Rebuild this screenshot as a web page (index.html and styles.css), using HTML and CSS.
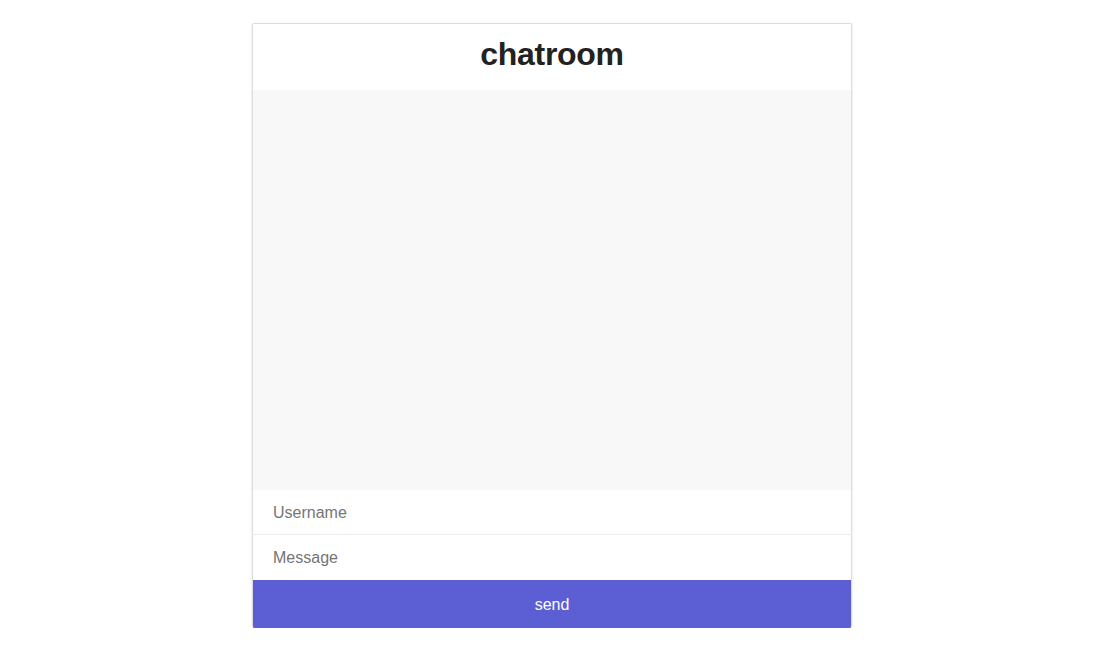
FILE: index.html
```html
<!DOCTYPE html>
<html>
<head>
<meta charset="utf-8">
<link rel="stylesheet" href="styles.css">
</head>
<body>
<div class="chat">
  <div class="chat-header"><h1 class="chat-title">chatroom</h1></div>
  <div class="chat-messages"></div>
  <input class="chat-input" type="text" placeholder="Username">
  <input class="chat-input chat-input-last" type="text" placeholder="Message">
  <button class="chat-send">send</button>
</div>
</body>
</html>
```
FILE: styles.css
```css
html, body {
  margin: 0;
  padding: 0;
  background: #fff;
  font-family: "Liberation Sans", Arial, sans-serif;
}
body {
  padding: 23px 5px 0 0;
}
.chat {
  width: 600px;
  box-sizing: border-box;
  margin: 0 auto;
  border: 1px solid #dddddd;
  border-bottom: none;
  border-radius: 2px;
  box-shadow: 0 1px 3px rgba(0,0,0,0.12);
  display: flex;
  flex-direction: column;
  overflow: hidden;
}
.chat-header {
  height: 66px;
  box-sizing: border-box;
  padding-bottom: 6px;
  display: flex;
  align-items: center;
  justify-content: center;
  background: #fff;
}
.chat-title {
  margin: 0;
  font-size: 32px;
  font-weight: bold;
  color: #222;
  letter-spacing: -0.3px;
}
.chat-messages {
  height: 400px;
  background: #f8f8f8;
}
.chat-input {
  height: 45px;
  box-sizing: border-box;
  border: none;
  border-bottom: 1px solid #ececec;
  padding: 1px 20px 0;
  font-family: "Liberation Sans", Arial, sans-serif;
  font-size: 16px;
  color: #333;
  outline: none;
  background: #fff;
}
.chat-input::placeholder {
  color: #757575;
}
.chat-input-last {
  border-bottom: none;
}
.chat-send {
  height: 48px;
  border: none;
  background: #5b5fd3;
  color: #fff;
  font-family: "Liberation Sans", Arial, sans-serif;
  font-size: 16px;
  padding: 2px 0 0;
  margin: 0;
}
```
